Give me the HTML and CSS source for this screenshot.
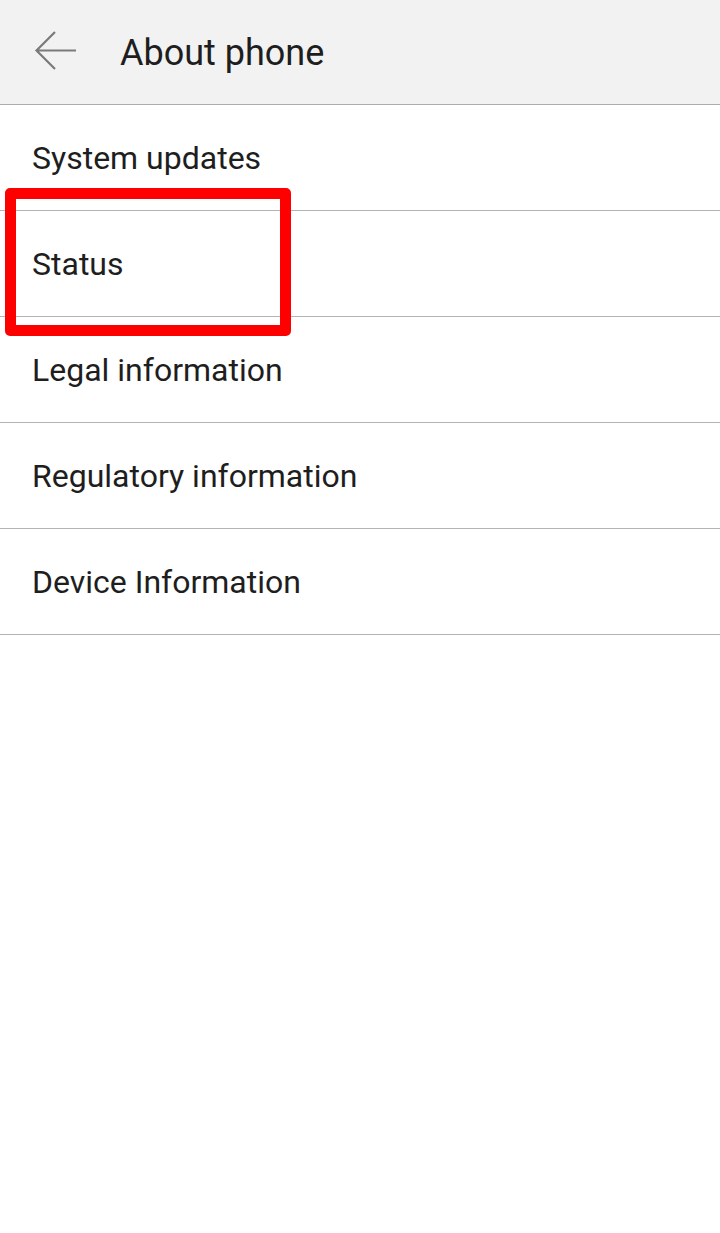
FILE: index.html
```html
<!DOCTYPE html>
<html lang="en">
<head>
  <meta charset="UTF-8" />
  <meta name="viewport" content="width=device-width, initial-scale=1.0"/>
  <title>About phone</title>
  <link rel="stylesheet" href="styles.css">
</head>
<body>
  <div class="screen">
    <div class="header">
      <svg class="back" width="44" height="42" viewBox="0 0 44 42">
        <path d="M42 20.5H3 M21 2L2.5 20.5L21 39" fill="none" stroke="#7a7a7a" stroke-width="2.2"/>
      </svg>
      <h1>About phone</h1>
    </div>
    <ul class="menu">
      <li>System updates</li>
      <li>Status</li>
      <li>Legal information</li>
      <li>Regulatory information</li>
      <li>Device Information</li>
    </ul>
    <div class="highlight"></div>
  </div>
</body>
</html>
```

FILE: styles.css
```css
body {
  margin: 0;
  padding: 0;
  background-color: #ffffff;
  font-family: Roboto, "Noto Sans", Arial, sans-serif;
}
.screen {
  position: relative;
  width: 720px;
  height: 1233px;
}
.header {
  display: flex;
  align-items: center;
  height: 104px;
  background-color: #f2f2f2;
  border-bottom: 1px solid #acacac;
  padding-left: 34px;
}
.header .back {
  margin-top: -2px;
}
.header h1 {
  margin: 2px 0 0 42px;
  font-size: 36px;
  font-weight: 400;
  color: #1e1e1e;
}
.menu {
  list-style: none;
  margin: 0;
  padding: 0;
}
.menu li {
  display: flex;
  align-items: center;
  height: 105px;
  padding-left: 32px;
  border-bottom: 1px solid #b4b4b4;
  font-size: 32px;
  color: #1e1e1e;
}
.highlight {
  position: absolute;
  left: 5px;
  top: 188px;
  width: 286px;
  height: 148px;
  box-sizing: border-box;
  border: 11px solid #fe0000;
  border-radius: 5px;
}
```
